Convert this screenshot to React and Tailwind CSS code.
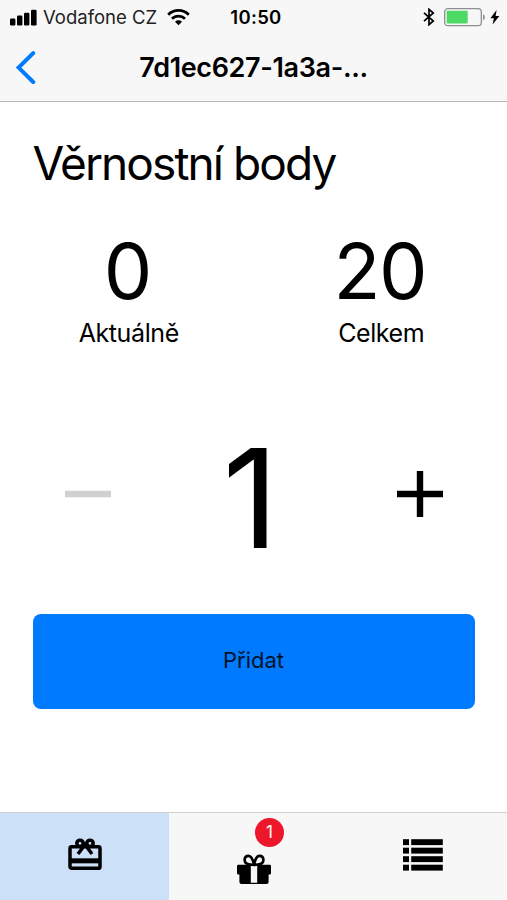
import React, { useState } from 'react';

// Loyalty points screen: current and total balance, a stepper for
// the amount to add, and the tab bar underneath.

function SignalBars() {
  return (
    <svg width="27" height="17" viewBox="0 0 27 17">
      <rect x="0" y="9.5" width="5.4" height="7" rx="1.3" />
      <rect x="7" y="6.6" width="5.4" height="9.9" rx="1.3" />
      <rect x="14" y="3.8" width="5.4" height="12.7" rx="1.3" />
      <rect x="21" y="0.8" width="5.6" height="15.7" rx="1.3" />
    </svg>
  );
}

function WifiIcon() {
  return (
    <svg width="23" height="17" viewBox="0 0 23 17" fill="none" stroke="#000" strokeWidth="2.8">
      <path d="M1.2 5.7a14.6 14.6 0 0 1 20.6 0" />
      <path d="M5 9.8a9.2 9.2 0 0 1 13 0" />
      <path d="M11.5 16.2 8 12.7a5 5 0 0 1 7 0z" fill="#000" stroke="none" />
    </svg>
  );
}

function BluetoothIcon() {
  return (
    <svg width="12" height="18" viewBox="0 0 12 18" fill="none" stroke="#000" strokeWidth="1.7">
      <path d="M1 4.9 10.3 13 6 16.7V1.3L10.3 5 1 13.1" />
    </svg>
  );
}

function BatteryIcon() {
  return (
    <svg width="42" height="19" viewBox="0 0 42 19">
      <rect x="0.7" y="0.7" width="36.6" height="17" rx="3.2" fill="none" stroke="#8e8e90" strokeWidth="1.3" />
      <rect x="2.7" y="2.8" width="21" height="12.8" rx="0.8" fill="#4cd964" />
      <path d="M39 6.2c2.4.8 2.4 5.2 0 6z" fill="#8e8e90" />
    </svg>
  );
}

function RedeemIcon() {
  return (
    <svg width="40" height="40" viewBox="0 0 24 24" fill="none" stroke="#000" strokeWidth="2.1">
      <rect x="3" y="7" width="18" height="13" rx="1" />
      <path d="M3 15.5h18" strokeWidth="3" />
      <circle cx="9" cy="5" r="1.9" />
      <circle cx="15" cy="5" r="1.9" />
      <path d="M7.8 11.4 12 5.7l4.2 5.7" />
    </svg>
  );
}

function GiftIcon() {
  return (
    <svg width="34" height="31" viewBox="0 0 34 31">
      <path
        d="M17 11C12 10.8 7.6 9.6 7.6 6.2c0-2.6 1.6-4.3 3.9-4.3 2.9 0 4.4 3.6 5.5 9.1 1.1-5.5 2.6-9.1 5.5-9.1 2.3 0 3.9 1.7 3.9 4.3 0 3.4-4.4 4.6-9.4 4.8z"
        fill="none"
        stroke="#000"
        strokeWidth="2.7"
      />
      <path d="M1.2 10.8H13.8V30H4.4a2 2 0 0 1-2-2V20.4H1.2A1.2 1.2 0 0 1 0 19.2V12a1.2 1.2 0 0 1 1.2-1.2z" />
      <path d="M32.8 10.8H20.2V30h9.4a2 2 0 0 0 2-2V20.4h1.2a1.2 1.2 0 0 0 1.2-1.2V12a1.2 1.2 0 0 0-1.2-1.2z" />
      <path d="M13.5 10.8h7v1.2h-7zM13.5 28.8h7V30h-7z" />
    </svg>
  );
}

function ListIcon() {
  return (
    <svg width="40" height="32" viewBox="0 0 40 32">
      {[0, 8.5, 17, 25.5].map((y) => (
        <g key={y}>
          <rect x="0" y={y + 0.2} width="6" height="5.9" />
          <rect x="8.2" y={y + 0.2} width="31.6" height="5.9" />
        </g>
      ))}
    </svg>
  );
}

function Balance({ value, label }) {
  return (
    <div className="flex flex-col items-center">
      <div className="pr-[2px] text-[77px] leading-[78px] tracking-[-1.5px]">{value}</div>
      <div className="mt-[8px] pl-px text-[25px] leading-[30px] tracking-[-0.4px]">{label}</div>
    </div>
  );
}

export default function App() {
  const [amount, setAmount] = useState(1);

  return (
    <div className="flex h-[900px] w-[507px] flex-col overflow-hidden bg-white font-['Inter',sans-serif] text-black">
      <header className="border-b border-[#b9b9bb] bg-[#f7f7f7]">
        <div className="grid h-[34px] grid-cols-[1fr_auto_1fr] items-center pl-[10px] pr-[7px]">
          <div className="flex items-center">
            <SignalBars />
            <span className="ml-[6px] mr-[10px] whitespace-nowrap pt-[2px] text-[18.5px] text-[#222]">Vodafone CZ</span>
            <WifiIcon />
          </div>
          <span className="pl-[2px] pt-[2px] text-[18.5px] font-semibold tracking-[0.3px]">10:50</span>
          <div className="flex items-center justify-end">
            <BluetoothIcon />
            <span className="ml-[9px]"><BatteryIcon /></span>
            <svg className="ml-[4px]" width="10" height="15" viewBox="0 0 10 15">
              <path d="M6.6 0 0.4 8.2h3.5L2.6 14.6 9.4 6H5.6z" />
            </svg>
          </div>
        </div>
        <div className="grid h-[67px] grid-cols-[60px_1fr_60px] items-center">
          <button aria-label="Zpět" className="pl-[15px]">
            <svg width="22" height="34" viewBox="0 0 22 34" fill="none" stroke="#007aff" strokeWidth="4" strokeLinecap="round">
              <path d="M18.2 2.2 3.6 16.6l14.6 14.4" />
            </svg>
          </button>
          <h1 className="pt-px text-center text-[27px] font-semibold tracking-[-0.35px]">7d1ec627-1a3a-...</h1>
        </div>
      </header>

      <main className="flex flex-1 flex-col">
        <h2 className="mt-[33px] pl-[32.5px] text-[46px] leading-[56px] tracking-[-1.9px]">Věrnostní body</h2>
        <div className="mt-[41px] grid grid-cols-2 pl-[2px]">
          <Balance value={0} label="Aktuálně" />
          <Balance value={20} label="Celkem" />
        </div>
        <div className="mt-[80px] grid h-[140px] grid-cols-3 items-center pl-[5px] pr-[4px]">
          <button
            aria-label="Ubrat"
            disabled={amount <= 1}
            onClick={() => setAmount(amount - 1)}
            className="mb-[9px] flex justify-center disabled:text-[#d0d0d0]"
          >
            <svg width="46" height="46" viewBox="0 0 46 46" fill="currentColor">
              <path d="M0 19.8h46v6.4H0z" />
            </svg>
          </button>
          <div className="pr-[7px] text-center text-[138px] leading-[140px]">{amount}</div>
          <button aria-label="Přidat bod" onClick={() => setAmount(amount + 1)} className="mb-[9px] flex justify-center">
            <svg width="46" height="46" viewBox="0 0 46 46" fill="currentColor">
              <path d="M0 19.8h19.8V0h6.4v19.8H46v6.4H26.2V46h-6.4V26.2H0z" />
            </svg>
          </button>
        </div>
        <button className="mx-[32.5px] mt-[45.5px] h-[95px] rounded-[8px] bg-[#007aff] pb-[2px] text-[22px] text-[#001328]">
          Přidat
        </button>
      </main>

      <nav className="grid h-[88px] grid-cols-3 border-t border-[#cfcfd1] bg-[#f7f7f7]">
        <button aria-label="Body" className="flex justify-center bg-[#cce0f8] pt-[22px]">
          <RedeemIcon />
        </button>
        <button aria-label="Odměny" className="relative flex justify-center pt-[41px]">
          <GiftIcon />
          <span className="absolute left-[86px] top-[5px] flex size-[29px] items-center justify-center rounded-full bg-[#ee1729] text-[17px] text-white">
            1
          </span>
        </button>
        <button aria-label="Historie" className="flex justify-center pt-[26px]">
          <ListIcon />
        </button>
      </nav>
    </div>
  );
}
